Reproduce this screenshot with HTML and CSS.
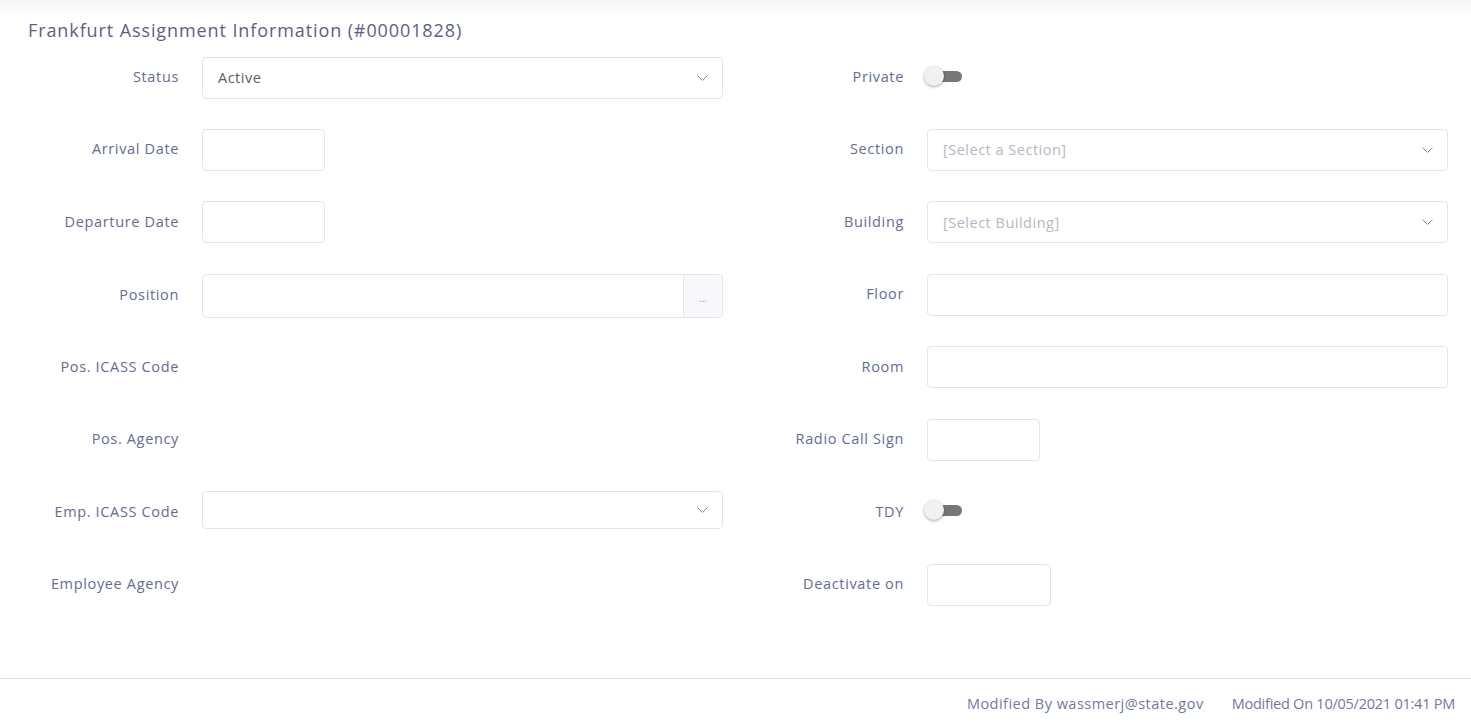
FILE: index.html
```html
<!DOCTYPE html>
<html>
<head>
<meta charset="utf-8">
<link rel="stylesheet" href="styles.css">
</head>
<body>
<div class="topshade"></div>
<div class="portlet">
  <h1 class="title">Frankfurt Assignment Information (#00001828)</h1>
  <div class="form">
    <div class="col">
      <div class="row"><label class="lbl">Status</label>
        <div class="select full"><span class="val">Active</span><svg class="chev" width="11" height="6" viewBox="0 0 11 6"><path d="M0.5 0.5 L5.5 5.5 L10.5 0.5" fill="none" stroke="#7d86b5" stroke-width="1"/></svg></div></div>
      <div class="row"><label class="lbl">Arrival Date</label><div class="box date"></div></div>
      <div class="row"><label class="lbl">Departure Date</label><div class="box date"></div></div>
      <div class="row"><label class="lbl">Position</label>
        <div class="group full"><div class="gin"></div><div class="gbtn">...</div></div></div>
      <div class="row"><label class="lbl">Pos. ICASS Code</label></div>
      <div class="row"><label class="lbl">Pos. Agency</label></div>
      <div class="row"><label class="lbl">Emp. ICASS Code</label>
        <div class="select full short"><span class="val"></span><svg class="chev" width="11" height="6" viewBox="0 0 11 6"><path d="M0.5 0.5 L5.5 5.5 L10.5 0.5" fill="none" stroke="#7d86b5" stroke-width="1"/></svg></div></div>
      <div class="row"><label class="lbl">Employee Agency</label></div>
    </div>
    <div class="col">
      <div class="row"><label class="lbl">Private</label><span class="toggle"><span class="track"></span><span class="knob"></span></span></div>
      <div class="row"><label class="lbl">Section</label>
        <div class="select full"><span class="ph">[Select a Section]</span><svg class="chev" width="11" height="6" viewBox="0 0 11 6"><path d="M0.5 0.5 L5.5 5.5 L10.5 0.5" fill="none" stroke="#7d86b5" stroke-width="1"/></svg></div></div>
      <div class="row"><label class="lbl">Building</label>
        <div class="select full"><span class="ph">[Select Building]</span><svg class="chev" width="11" height="6" viewBox="0 0 11 6"><path d="M0.5 0.5 L5.5 5.5 L10.5 0.5" fill="none" stroke="#7d86b5" stroke-width="1"/></svg></div></div>
      <div class="row"><label class="lbl">Floor</label><div class="box full"></div></div>
      <div class="row"><label class="lbl">Room</label><div class="box full"></div></div>
      <div class="row"><label class="lbl">Radio Call Sign</label><div class="box radio"></div></div>
      <div class="row"><label class="lbl">TDY</label><span class="toggle"><span class="track"></span><span class="knob"></span></span></div>
      <div class="row"><label class="lbl">Deactivate on</label><div class="box deact"></div></div>
    </div>
  </div>
  <div class="footer">
    <span class="mod-by">Modified By wassmerj@state.gov</span>
    <span class="mod-on">Modified On 10/05/2021 01:41 PM</span>
  </div>
</div>
</body>
</html>
```

FILE: styles.css
```css
html, body {
  margin: 0;
  padding: 0;
  background: #ffffff;
  font-family: "Open Sans", "Noto Sans", sans-serif;
  color: #646c9a;
}
.topshade {
  height: 18px;
  background: linear-gradient(to bottom, #f7f7f7, #ffffff);
}
.portlet {
  display: flex;
  flex-direction: column;
}
.title {
  margin: 1px 0 0 28px;
  font-size: 18px;
  font-weight: 500;
  color: #5b5f86;
  line-height: 22px;
  letter-spacing: 0.9px;
}
.form {
  display: grid;
  grid-template-columns: 701px 701px;
  column-gap: 24px;
  padding-left: 22px;
  margin-top: 15.5px;
}
.col {
  display: flex;
  flex-direction: column;
}
.row {
  display: grid;
  grid-template-columns: 157px 1fr;
  column-gap: 23px;
  align-items: center;
  height: 42px;
  margin-bottom: 30.45px;
}
.lbl {
  text-align: right;
  font-size: 14.5px;
  letter-spacing: 0.65px;
  color: #646c9a;
  white-space: nowrap;
  margin-top: -2px;
}
.box, .select, .group {
  box-sizing: border-box;
  border: 1px solid #e2e5ec;
  border-radius: 4px;
  height: 42px;
  background: #fff;
}
.full { width: 521px; }
.date { width: 123px; }
.radio { width: 113px; }
.deact { width: 124px; }
.select {
  display: flex;
  align-items: center;
  justify-content: space-between;
  padding: 0 14px 0 15px;
  font-size: 14.5px;
  letter-spacing: 0.5px;
}
.select.short { height: 38px; align-self: start; }
.val { color: #595d6e; }
.ph { color: #b4b7c6; }
.chev { display: block; }
.group {
  display: flex;
  height: 44px;
  overflow: hidden;
  align-self: start;
}
.gin { flex: 1; }
.gbtn {
  width: 39px;
  border-left: 1px solid #e2e5ec;
  background: #f7f8fa;
  color: #a0a4b8;
  font-size: 10px;
  display: flex;
  align-items: center;
  justify-content: center;
  padding-top: 4px;
  box-sizing: border-box;
}
.toggle {
  position: relative;
  display: block;
  width: 38px;
  height: 20px;
  margin-left: -3px;
  margin-top: -4px;
}
.track {
  position: absolute;
  left: 12px;
  top: 5px;
  width: 26px;
  height: 11px;
  border-radius: 6px;
  background: #777777;
}
.knob {
  position: absolute;
  left: 0;
  top: 0;
  width: 20px;
  height: 20px;
  border-radius: 50%;
  background: #f1f1f1;
  box-shadow: 0 1px 3px rgba(0,0,0,0.35);
}
.footer {
  margin-top: 42px;
  border-top: 1px solid #e2e5ec;
  height: 48px;
  display: flex;
  justify-content: flex-end;
  align-items: center;
  gap: 28px;
  padding-right: 16px;
  font-size: 14.5px;
  color: #6f78a8;
}
.mod-by { letter-spacing: 0.48px; }
.mod-on { letter-spacing: -0.24px; }
```
